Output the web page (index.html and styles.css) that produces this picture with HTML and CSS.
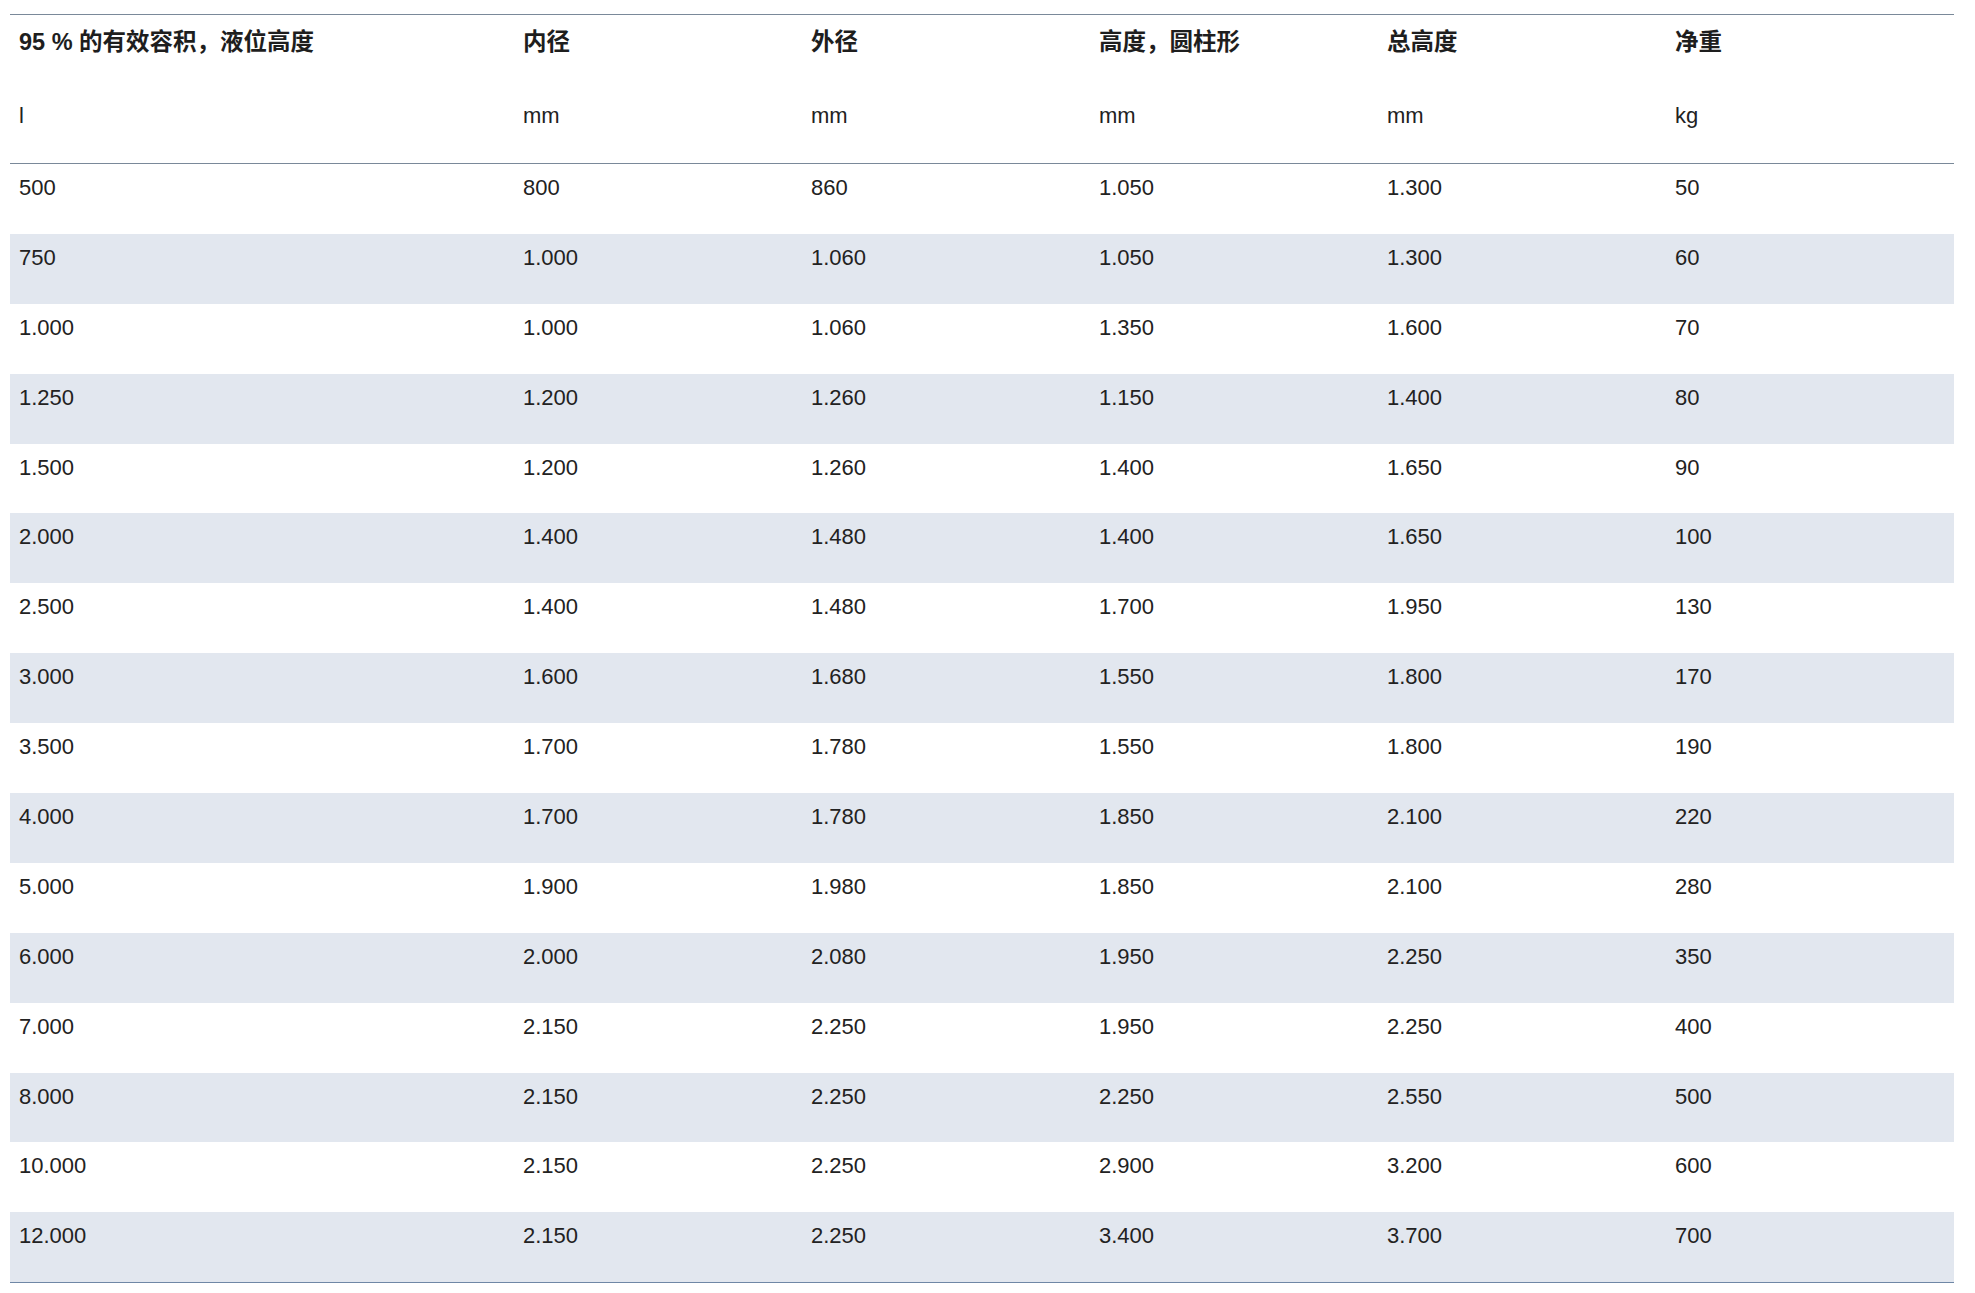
FILE: index.html
```html
<!DOCTYPE html>
<html lang="zh">
<head>
<meta charset="utf-8">
<title>规格表</title>
<link rel="stylesheet" href="styles.css">
</head>
<body>
<div class="page">
<table class="spec">
  <colgroup>
    <col class="c-first">
    <col class="c-std">
    <col class="c-std">
    <col class="c-std">
    <col class="c-std">
    <col class="c-std">
  </colgroup>
  <thead>
    <tr class="head-title">
      <th>95 % 的有效容积，液位高度</th>
      <th>内径</th>
      <th>外径</th>
      <th>高度，圆柱形</th>
      <th>总高度</th>
      <th>净重</th>
    </tr>
    <tr class="head-unit">
      <td>l</td>
      <td>mm</td>
      <td>mm</td>
      <td>mm</td>
      <td>mm</td>
      <td>kg</td>
    </tr>
  </thead>
  <tbody>
    <tr><td>500</td><td>800</td><td>860</td><td>1.050</td><td>1.300</td><td>50</td></tr>
    <tr><td>750</td><td>1.000</td><td>1.060</td><td>1.050</td><td>1.300</td><td>60</td></tr>
    <tr><td>1.000</td><td>1.000</td><td>1.060</td><td>1.350</td><td>1.600</td><td>70</td></tr>
    <tr><td>1.250</td><td>1.200</td><td>1.260</td><td>1.150</td><td>1.400</td><td>80</td></tr>
    <tr><td>1.500</td><td>1.200</td><td>1.260</td><td>1.400</td><td>1.650</td><td>90</td></tr>
    <tr><td>2.000</td><td>1.400</td><td>1.480</td><td>1.400</td><td>1.650</td><td>100</td></tr>
    <tr><td>2.500</td><td>1.400</td><td>1.480</td><td>1.700</td><td>1.950</td><td>130</td></tr>
    <tr><td>3.000</td><td>1.600</td><td>1.680</td><td>1.550</td><td>1.800</td><td>170</td></tr>
    <tr><td>3.500</td><td>1.700</td><td>1.780</td><td>1.550</td><td>1.800</td><td>190</td></tr>
    <tr><td>4.000</td><td>1.700</td><td>1.780</td><td>1.850</td><td>2.100</td><td>220</td></tr>
    <tr><td>5.000</td><td>1.900</td><td>1.980</td><td>1.850</td><td>2.100</td><td>280</td></tr>
    <tr><td>6.000</td><td>2.000</td><td>2.080</td><td>1.950</td><td>2.250</td><td>350</td></tr>
    <tr><td>7.000</td><td>2.150</td><td>2.250</td><td>1.950</td><td>2.250</td><td>400</td></tr>
    <tr><td>8.000</td><td>2.150</td><td>2.250</td><td>2.250</td><td>2.550</td><td>500</td></tr>
    <tr><td>10.000</td><td>2.150</td><td>2.250</td><td>2.900</td><td>3.200</td><td>600</td></tr>
    <tr><td>12.000</td><td>2.150</td><td>2.250</td><td>3.400</td><td>3.700</td><td>700</td></tr>
  </tbody>
</table>
</div>
</body>
</html>
```

FILE: styles.css
```css
html, body {
  margin: 0;
  padding: 0;
  background: #ffffff;
}

body {
  font-family: "Liberation Sans", Arial, "Noto Sans CJK SC", sans-serif;
  font-size: 22px;
  color: #222222;
}

.page {
  padding: 14px 0 0 10px;
}

.spec {
  width: 1944px;
  border-collapse: collapse;
  table-layout: fixed;
  border-bottom: 1px solid #6f87a6;
}

.c-first {
  width: 504px;
}

.c-std {
  width: 288px;
}

.spec th,
.spec td {
  text-align: left;
  vertical-align: top;
  line-height: 24px;
  padding: 12px 9px 33.9px;
  white-space: nowrap;
}

.spec th {
  font-weight: bold;
  font-size: 23.5px;
  color: #1e1e1e;
}

.head-title th {
  border-top: 1px solid #7a8999;
  padding-top: 15px;
  padding-bottom: 35px;
}

.head-unit td {
  padding-top: 15px;
  padding-bottom: 35px;
  border-bottom: 1px solid #7a8999;
}

.spec tbody tr:nth-child(even) td {
  background: #e2e7ef;
}
```
